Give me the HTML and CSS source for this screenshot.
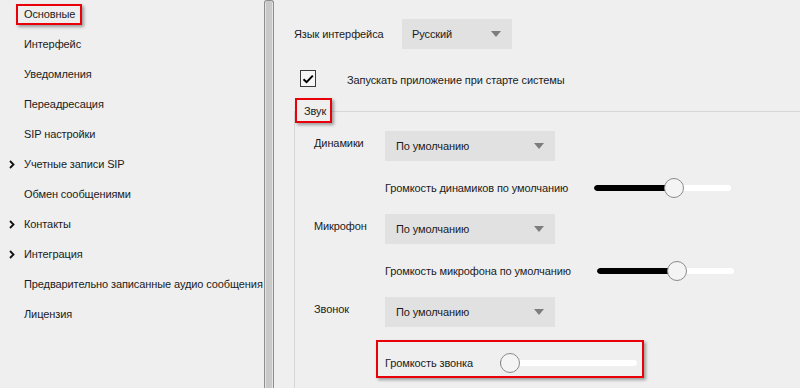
FILE: index.html
```html
<!DOCTYPE html>
<html lang="ru">
<head>
<meta charset="utf-8">
<title>Настройки</title>
<link rel="stylesheet" href="styles.css">
</head>
<body>
<div class="app">
  <nav class="sidebar">
    <ul class="nav">
      <li class="nav-item nav-item-active"><span class="mark mark-nav">Основные</span></li>
      <li class="nav-item">Интерфейс</li>
      <li class="nav-item">Уведомления</li>
      <li class="nav-item">Переадресация</li>
      <li class="nav-item">SIP настройки</li>
      <li class="nav-item nav-parent"><svg class="chevron" width="6" height="9" viewBox="0 0 6 9"><path d="M1 1 L4.5 4.5 L1 8" fill="none" stroke="#111" stroke-width="1.8"/></svg>Учетные записи SIP</li>
      <li class="nav-item">Обмен сообщениями</li>
      <li class="nav-item nav-parent"><svg class="chevron" width="6" height="9" viewBox="0 0 6 9"><path d="M1 1 L4.5 4.5 L1 8" fill="none" stroke="#111" stroke-width="1.8"/></svg>Контакты</li>
      <li class="nav-item nav-parent"><svg class="chevron" width="6" height="9" viewBox="0 0 6 9"><path d="M1 1 L4.5 4.5 L1 8" fill="none" stroke="#111" stroke-width="1.8"/></svg>Интеграция</li>
      <li class="nav-item">Предварительно записанные аудио сообщения</li>
      <li class="nav-item">Лицензия</li>
    </ul>
  </nav>
  <div class="splitter"></div>
  <main class="content">
    <div class="lang-row">
      <span class="lang-label">Язык интерфейса</span>
      <div class="select select-lang"><span>Русский</span><i class="caret"></i></div>
    </div>
    <div class="check-row">
      <span class="checkbox"><svg width="14" height="14" viewBox="0 0 14 14"><path d="M2.5 7.2 L5.6 10.2 L11.8 3.6" fill="none" stroke="#000" stroke-width="2"/></svg></span>
      <span class="check-text">Запускать приложение при старте системы</span>
    </div>
    <section class="group">
      <div class="legend"><span class="mark mark-legend">Звук</span></div>
      <div class="device">
        <span class="device-label">Динамики</span>
        <div class="device-body">
          <div class="select select-device"><span>По умолчанию</span><i class="caret"></i></div>
          <div class="volume-row">
            <span>Громкость динамиков по умолчанию</span>
            <div class="slider" style="--v:0.6"><div class="track"><div class="fill"></div></div><div class="thumb"></div></div>
          </div>
        </div>
      </div>
      <div class="device">
        <span class="device-label">Микрофон</span>
        <div class="device-body">
          <div class="select select-device"><span>По умолчанию</span><i class="caret"></i></div>
          <div class="volume-row">
            <span>Громкость микрофона по умолчанию</span>
            <div class="slider" style="--v:0.6"><div class="track"><div class="fill"></div></div><div class="thumb"></div></div>
          </div>
        </div>
      </div>
      <div class="device">
        <span class="device-label">Звонок</span>
        <div class="device-body">
          <div class="select select-device"><span>По умолчанию</span><i class="caret"></i></div>
          <div class="volume-row volume-row-marked">
            <span>Громкость звонка</span>
            <div class="slider" style="--v:0"><div class="track"><div class="fill"></div></div><div class="thumb"></div></div>
          </div>
        </div>
      </div>
    </section>
  </main>
</div>
</body>
</html>
```

FILE: styles.css
```css
* { box-sizing: border-box; }

html, body {
  margin: 0;
  padding: 0;
  height: 100%;
  overflow: hidden;
}

body {
  background: #efefef;
  color: #1b1b1b;
  font-family: "Liberation Sans", Arial, sans-serif;
  font-size: 11px;
  line-height: 17px;
  letter-spacing: -0.1px;
}

.app {
  display: flex;
  height: 388px;
}

/* ---------- sidebar ---------- */
.sidebar {
  width: 264px;
  flex: none;
}

.nav {
  list-style: none;
  margin: -1px 0 0 0;
  padding: 0;
}

.nav-item {
  height: 30px;
  display: flex;
  align-items: center;
  padding-left: 24px;
  white-space: nowrap;
}

.nav-item-active {
  padding-left: 16px;
}

.nav-parent {
  padding-left: 9px;
}

.chevron {
  margin-right: 9px;
  flex: none;
}

.mark {
  border: 2px solid #e8000b;
  box-shadow: 2px 2px 3px rgba(0, 0, 0, 0.35);
}

.mark-nav {
  display: block;
  width: 66px;
  height: 21px;
  padding: 0 6px;
  line-height: 17px;
}

.splitter {
  width: 10px;
  flex: none;
  border: 1px solid #8e8e8e;
  border-bottom: none;
  border-radius: 3px 3px 0 0;
  background: #c9c9c9;
  box-shadow: inset 1px 0 0 #e4e4e4, inset -1px 0 0 #e4e4e4;
}

/* ---------- content ---------- */
.content {
  flex: 1;
  padding-left: 20px;
  min-width: 0;
  display: flex;
  flex-direction: column;
}

.lang-row {
  display: flex;
  align-items: center;
  margin-top: 19px;
}

.lang-label {
  width: 108px;
  flex: none;
}

.select {
  height: 30px;
  background: #e1e1e1;
  display: flex;
  align-items: center;
  justify-content: space-between;
  padding: 0 11px 0 11px;
}

.select-lang {
  width: 110px;
  padding-left: 10px;
}

.select-device {
  width: 170px;
}

.caret {
  width: 0;
  height: 0;
  border-left: 5px solid transparent;
  border-right: 5px solid transparent;
  border-top: 6px solid #7d7d7d;
}

.check-row {
  display: flex;
  align-items: center;
  margin-top: 21px;
  padding-left: 6px;
  height: 17px;
}

.checkbox {
  width: 16px;
  height: 17px;
  border: 1px solid #3a3a3a;
  background: #f7f7f7;
  display: flex;
  align-items: center;
  justify-content: center;
  flex: none;
}

.check-text {
  margin-left: 31px;
  padding-top: 3px;
}

/* ---------- group box ---------- */
.group {
  position: relative;
  flex: 1;
  margin-top: 24px;
  border-top: 1px solid #d6d6d6;
  border-left: 1px solid #d6d6d6;
  padding: 19px 0 0 19px;
}

.legend {
  position: absolute;
  left: 0;
  top: -14px;
  background: #efefef;
}

.mark-legend {
  display: block;
  width: 37px;
  height: 25px;
  padding: 2px 0 0 7px;
  line-height: 19px;
}

.device {
  display: flex;
  align-items: flex-start;
}

.device-label {
  width: 71px;
  flex: none;
  padding-top: 4px;
}

.device-body {
  display: flex;
  flex-direction: column;
  align-items: flex-start;
}

.volume-row {
  display: flex;
  align-items: center;
  gap: 26px;
  height: 22px;
  margin: 16px 0 15px 0;
}

.volume-row-marked {
  height: 38px;
  margin: 13px 0 0 -9px;
  padding: 9px 5px 1px 7px;
  border: 2px solid #e8000b;
  box-shadow: 2px 2px 3px rgba(0, 0, 0, 0.35);
  gap: 27px;
}

/* ---------- slider ---------- */
.slider {
  position: relative;
  width: 137px;
  height: 22px;
  flex: none;
}

.track {
  position: absolute;
  left: 0;
  right: 0;
  top: 8px;
  height: 6px;
  border-radius: 3px;
  background: #ffffff;
  overflow: hidden;
}

.fill {
  height: 100%;
  width: calc(10px + (100% - 20px) * var(--v));
  background: #000;
  border-radius: 3px;
}

.thumb {
  position: absolute;
  top: 1px;
  left: calc((100% - 20px) * var(--v));
  width: 20px;
  height: 20px;
  border-radius: 50%;
  background: #f4f4f4;
  border: 1px solid #8a8a8a;
}
```
